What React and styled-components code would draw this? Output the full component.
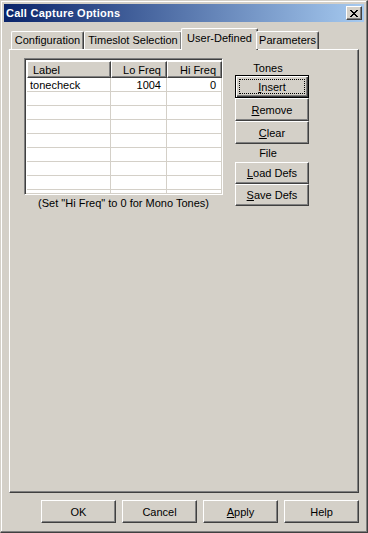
import styled, { createGlobalStyle, css } from 'styled-components';

const Global = createGlobalStyle`
    html, body {
        margin: 0;
        padding: 0;
        background: #d4d0c8;
    }
    * {
        box-sizing: border-box;
    }
`

const bevel = css`
    border-style: solid;
    border-width: 1px;
    border-color: #ffffff #404040 #404040 #ffffff;
    box-shadow: inset -1px -1px 0 #808080, inset 1px 1px 0 #d4d0c8;
`

const Window = styled.div`
    width: 368px;
    height: 533px;
    display: flex;
    flex-direction: column;
    background: #d4d0c8;
    border-style: solid;
    border-width: 1px;
    border-color: #d4d0c8 #404040 #404040 #d4d0c8;
    box-shadow: inset -1px -1px 0 #808080, inset 1px 1px 0 #ffffff;
    padding: 3px;
    font-family: "Liberation Sans", Arial, sans-serif;
    font-size: 11px;
    color: #000;
`
const TitleBar = styled.div`
    height: 18px;
    display: flex;
    align-items: center;
    justify-content: space-between;
    padding: 0 2px 0 2px;
    background: linear-gradient(to right, #0a246a, #a6caf0);
`
const Title = styled.span`
    color: #fff;
    font-weight: bold;
    font-size: 11px;
    letter-spacing: 0.25px;
`
const CloseBox = styled.div`
    width: 16px;
    height: 14px;
    ${bevel}
    background: #d4d0c8;
    display: flex;
    align-items: center;
    justify-content: center;
`
const Body = styled.div`
    flex: 1;
    display: flex;
    flex-direction: column;
    padding: 6px 5px 6px 5px;
`
const TabStrip = styled.div`
    height: 21px;
    display: flex;
    align-items: flex-end;
    padding-left: 2px;
    position: relative;
    z-index: 1;
`
const Tab = styled.div`
    width: ${p => p.$w}px;
    height: 18px;
    display: flex;
    align-items: center;
    justify-content: center;
    background: #d4d0c8;
    border-top: 1px solid #fff;
    border-left: 1px solid #fff;
    border-right: 1px solid #404040;
    border-radius: 2px 2px 0 0;
    box-shadow: inset -1px 0 0 #808080;
    padding-bottom: 1px;
    ${p => p.$active && css`
        height: 22px;
        margin: 0 -2px -1px -1px;
        padding-bottom: 3px;
    `}
`
const Panel = styled.div`
    flex: 1;
    display: flex;
    align-items: flex-start;
    gap: 12px;
    padding: 8px 14px;
    border-style: solid;
    border-width: 1px;
    border-color: #fff #404040 #404040 #fff;
    box-shadow: inset -1px -1px 0 #808080;
`
const ListColumn = styled.div`
    display: flex;
    flex-direction: column;
    align-items: center;
`
const ListView = styled.div`
    width: 199px;
    height: 137px;
    background: #fff;
    border-style: solid;
    border-width: 1px;
    border-color: #808080 #ffffff #ffffff #808080;
    box-shadow: inset 1px 1px 0 #404040, inset -1px -1px 0 #d4d0c8;
    padding: 2px;
    overflow: hidden;
`
const Grid = styled.div`
    display: grid;
    grid-template-columns: 84px 56px 55px;
`
const HeadCell = styled.div`
    height: 17px;
    ${bevel}
    background: #d4d0c8;
    display: flex;
    align-items: center;
    justify-content: ${p => (p.$right ? 'flex-end' : 'flex-start')};
    padding: 0 5px;
`
const Cell = styled.div`
    height: 14px;
    border-right: 1px solid #d4d0c8;
    border-bottom: 1px solid #d4d0c8;
    display: flex;
    align-items: center;
    justify-content: ${p => (p.$right ? 'flex-end' : 'flex-start')};
    padding: 0 5px 0 3px;
`
const Caption = styled.div`
    margin-top: 2px;
    line-height: 13px;
`
const ButtonColumn = styled.div`
    width: 74px;
    display: flex;
    flex-direction: column;
    margin-top: 3px;
`
const GroupLabel = styled.div`
    height: ${p => p.$h}px;
    display: flex;
    align-items: center;
    justify-content: center;
    padding-right: 8px;
`
const Button = styled.button`
    width: ${p => p.$w || 74}px;
    height: ${p => p.$h || 23}px;
    font-family: inherit;
    font-size: 11px;
    color: #000;
    background: #d4d0c8;
    padding: 0;
    ${bevel}
    ${p => p.$default && css`
        border: 1px solid #000;
        box-shadow: inset 1px 1px 0 #fff, inset -1px -1px 0 #404040, inset -2px -2px 0 #808080;
        position: relative;
        &::after {
            content: '';
            position: absolute;
            inset: 3px;
            border: 1px dotted #000;
        }
    `}
`
const Footer = styled.div`
    display: flex;
    justify-content: flex-end;
    gap: 6px;
    margin-top: 7px;
`

const rows = [
    ['tonecheck', '1004', '0'],
    ['', '', ''], ['', '', ''], ['', '', ''], ['', '', ''],
    ['', '', ''], ['', '', ''], ['', '', ''], ['', '', ''],
]

const App = () => {
    return (
        <>
            <Global />
            <Window>
                <TitleBar>
                    <Title>Call Capture Options</Title>
                    <CloseBox>
                        <svg width="8" height="7" viewBox="0 0 8 7" shapeRendering="crispEdges">
                            <path d="M0 0h2v1h-2zM6 0h2v1h-2zM1 1h2v1h-2zM5 1h2v1h-2zM2 2h4v1h-4zM3 3h2v1h-2zM2 4h4v1h-4zM1 5h2v1h-2zM5 5h2v1h-2zM0 6h2v1h-2zM6 6h2v1h-2z" fill="#000" />
                        </svg>
                    </CloseBox>
                </TitleBar>
                <Body>
                    <TabStrip>
                        <Tab $w={73}>Configuration</Tab>
                        <Tab $w={98}>Timeslot Selection</Tab>
                        <Tab $w={77} $active>User-Defined</Tab>
                        <Tab $w={63}>Parameters</Tab>
                    </TabStrip>
                    <Panel>
                        <ListColumn>
                            <ListView>
                                <Grid>
                                    <HeadCell>Label</HeadCell>
                                    <HeadCell $right>Lo Freq</HeadCell>
                                    <HeadCell $right>Hi Freq</HeadCell>
                                    {rows.map((r, i) => (
                                        <>
                                            <Cell key={'a' + i}>{r[0]}</Cell>
                                            <Cell key={'b' + i} $right>{r[1]}</Cell>
                                            <Cell key={'c' + i} $right>{r[2]}</Cell>
                                        </>
                                    ))}
                                </Grid>
                            </ListView>
                            <Caption>(Set "Hi Freq" to 0 for Mono Tones)</Caption>
                        </ListColumn>
                        <ButtonColumn>
                            <GroupLabel $h={14}>Tones</GroupLabel>
                            <Button $default><u>I</u>nsert</Button>
                            <Button><u>R</u>emove</Button>
                            <Button><u>C</u>lear</Button>
                            <GroupLabel $h={18}>File</GroupLabel>
                            <Button $h={22}><u>L</u>oad Defs</Button>
                            <Button $h={22}><u>S</u>ave Defs</Button>
                        </ButtonColumn>
                    </Panel>
                    <Footer>
                        <Button $w={75}>OK</Button>
                        <Button $w={75}>Cancel</Button>
                        <Button $w={75}><u>A</u>pply</Button>
                        <Button $w={75}>Help</Button>
                    </Footer>
                </Body>
            </Window>
        </>
    )
}

export default App
